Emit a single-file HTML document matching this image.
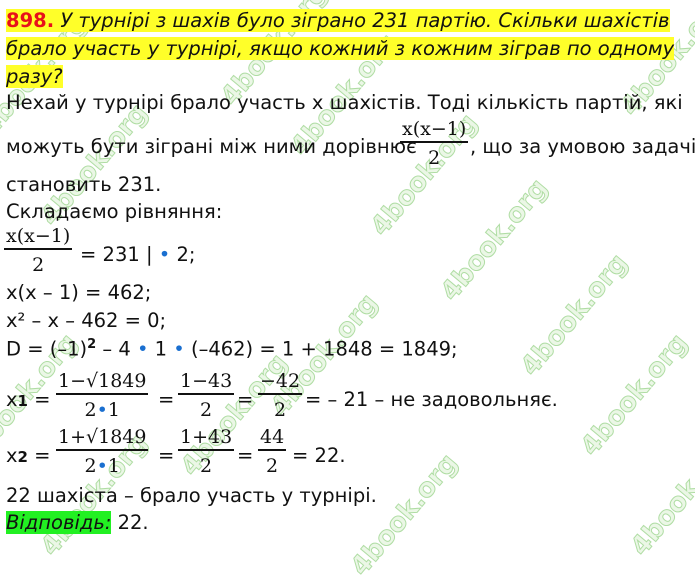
<!DOCTYPE html><html><head><meta charset="utf-8"><style>
body{margin:0;width:695px;height:545px;background:#fff;position:relative;overflow:hidden;font-family:"DejaVu Sans","Liberation Sans",sans-serif;font-size:19.5px;color:#111}
.l{position:absolute;white-space:nowrap;left:6px}
.hl{background:#ffff29}
.q{font-style:italic}
.r{color:#e8101a;font-weight:bold;font-style:normal}
.fr{position:absolute;text-align:center;font-family:"DejaVu Serif","Liberation Serif",serif;font-size:19px;white-space:nowrap}
.fr .n{border-bottom:2px solid #111;padding:0 2px 1px}
.fr .d{padding-top:4px}
.dot{color:#1a6fd0}
.wm{position:absolute;font-family:"DejaVu Sans",sans-serif;font-weight:bold;font-size:26px;color:#e3f5dc;-webkit-text-stroke:1px #8fcf7e;transform:rotate(-50deg);white-space:nowrap;opacity:.7}
</style></head><body>
<div class="wm" style="left:-40px;top:60px">4book.org</div>
<div class="wm" style="left:200px;top:30px">4book.org</div>
<div class="wm" style="left:270px;top:80px">4book.org</div>
<div class="wm" style="left:350px;top:160px">4book.org</div>
<div class="wm" style="left:420px;top:225px">4book.org</div>
<div class="wm" style="left:500px;top:300px">4book.org</div>
<div class="wm" style="left:560px;top:380px">4book.org</div>
<div class="wm" style="left:610px;top:480px">4book.org</div>
<div class="wm" style="left:600px;top:40px">4book.org</div>
<div class="wm" style="left:-50px;top:380px">4book.org</div>
<div class="wm" style="left:20px;top:480px">4book.org</div>
<div class="wm" style="left:160px;top:400px">4book.org</div>
<div class="wm" style="left:250px;top:340px">4book.org</div>
<div class="wm" style="left:330px;top:500px">4book.org</div>
<div class="wm" style="left:20px;top:150px">4book.org</div>
<div class="l" style="top:9px"><span class="hl q"><span class="r">898.</span> У турнірі з шахів було зіграно 231 партію. Скільки шахістів</span></div>
<div class="l" style="top:37px"><span class="hl q">брало участь у турнірі, якщо кожний з кожним зіграв по одному</span></div>
<div class="l" style="top:65px"><span class="hl q">разу?</span></div>
<div class="l" style="top:91px">Нехай у турнірі брало участь х шахістів. Тоді кількість партій, які</div>
<div class="l" style="top:135px">можуть бути зіграні між ними дорівнює</div>
<div class="fr" style="left:400px;top:118px"><div class="n">x(x−1)</div><div class="d">2</div></div>
<div class="l" style="left:470px;top:135px">, що за умовою задачі</div>
<div class="l" style="top:173px">становить 231.</div>
<div class="l" style="top:200px">Складаємо рівняння:</div>
<div class="fr" style="left:4px;top:225px"><div class="n">x(x−1)</div><div class="d">2</div></div>
<div class="l" style="left:80px;top:243px">= 231 | <span class="dot">•</span> 2;</div>
<div class="l" style="top:281px">x(x – 1) = 462;</div>
<div class="l" style="top:309px">x² – x – 462 = 0;</div>
<div class="l" style="top:337px">D = (–1)<sup style="font-size:13px;font-weight:bold">2</sup> – 4 <span class="dot">•</span> 1 <span class="dot">•</span> (–462) = 1 + 1848 = 1849;</div>
<div class="l" style="top:388px">x<b style="font-size:15px">1</b> =</div>
<div class="fr" style="left:56px;top:370px"><div class="n">1−√1849</div><div class="d">2<span class="dot">•</span>1</div></div>
<div class="l" style="left:158px;top:388px">=</div>
<div class="fr" style="left:178px;top:370px"><div class="n">1−43</div><div class="d">2</div></div>
<div class="l" style="left:237px;top:388px">=</div>
<div class="fr" style="left:258px;top:370px"><div class="n">−42</div><div class="d">2</div></div>
<div class="l" style="left:305px;top:388px">= – 21 – не задовольняє.</div>
<div class="l" style="top:444px">x<b style="font-size:15px">2</b> =</div>
<div class="fr" style="left:56px;top:426px"><div class="n">1+√1849</div><div class="d">2<span class="dot">•</span>1</div></div>
<div class="l" style="left:158px;top:444px">=</div>
<div class="fr" style="left:178px;top:426px"><div class="n">1+43</div><div class="d">2</div></div>
<div class="l" style="left:237px;top:444px">=</div>
<div class="fr" style="left:258px;top:426px"><div class="n">44</div><div class="d">2</div></div>
<div class="l" style="left:292px;top:444px">= 22.</div>
<div class="l" style="top:484px">22 шахіста – брало участь у турнірі.</div>
<div class="l" style="top:511px"><span class="q" style="background:#22f022">Відповідь:</span> 22.</div>
</body></html>
